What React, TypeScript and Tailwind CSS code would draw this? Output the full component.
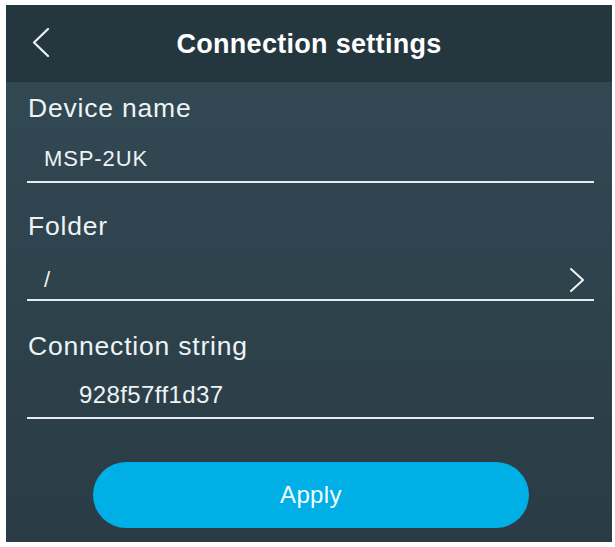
import React from 'react'

const font = { fontFamily: '"Liberation Sans", Arial, sans-serif' }

function BackIcon() {
  return (
    <svg width="18" height="30" viewBox="0 0 18 30" className="text-[#eef3f5]">
      <polyline
        points="16,1 2,14.5 16,28"
        fill="none"
        stroke="currentColor"
        strokeWidth="2.2"
        strokeLinecap="round"
        strokeLinejoin="round"
      />
    </svg>
  )
}

function NextIcon() {
  return (
    <svg width="16" height="24" viewBox="0 0 16 24" className="text-[#eef3f5]">
      <polyline
        points="2,1 14,12 2,23"
        fill="none"
        stroke="currentColor"
        strokeWidth="2"
        strokeLinecap="round"
        strokeLinejoin="round"
      />
    </svg>
  )
}

export default function App() {
  return (
    <div
      className="w-[615px] h-[547px] bg-white pl-[6px] pt-[5px] pr-[3px] pb-[5px]"
      style={font}
    >
      <div className="w-full h-full flex flex-col bg-gradient-to-b from-[#334a55] to-[#2a3c45]">
        {/* header */}
        <div className="h-[77px] shrink-0 bg-[#24363e] flex items-center relative">
          <div className="absolute left-[26px] top-[23px]">
            <BackIcon />
          </div>
          <div className="flex-1 text-center text-white text-[27px] font-bold leading-[32px] tracking-[0.3px]">
            Connection settings
          </div>
        </div>

        {/* form */}
        <div className="flex flex-col pl-[21px] pr-[18px] pt-[11px] text-[#eef3f5]">
          {/* device name */}
          <div className="text-[26.5px] leading-[30px] pl-[1px] tracking-[0.8px]">Device name</div>
          <div className="mt-[23px] pl-[17px] pb-[9px] border-b-2 border-[#e4ecef] text-[22px] leading-[26px] tracking-[0.9px]">
            MSP-2UK
          </div>

          {/* folder */}
          <div className="mt-[28px] text-[26.5px] leading-[30px] pl-[1px] tracking-[0.8px]">Folder</div>
          <div className="mt-[26px] pl-[17px] pr-[9px] pb-[6px] border-b-2 border-[#e4ecef] flex items-center justify-between text-[22px] leading-[26px]">
            <span>/</span>
            <NextIcon />
          </div>

          {/* connection string */}
          <div className="mt-[30px] text-[26.5px] leading-[30px] pl-[1px] tracking-[0.8px]">Connection string</div>
          <div className="mt-[20px] pl-[52px] pb-[8px] border-b-2 border-[#e4ecef] text-[24px] leading-[28px] tracking-[0.4px]">
            928f57ff1d37
          </div>

          {/* apply */}
          <button className="mt-[43px] ml-[66px] w-[436px] h-[66px] rounded-full bg-[#00afe5] text-[24px] text-[#f4fbfe] tracking-[0.4px]">
            Apply
          </button>
        </div>
      </div>
    </div>
  )
}
